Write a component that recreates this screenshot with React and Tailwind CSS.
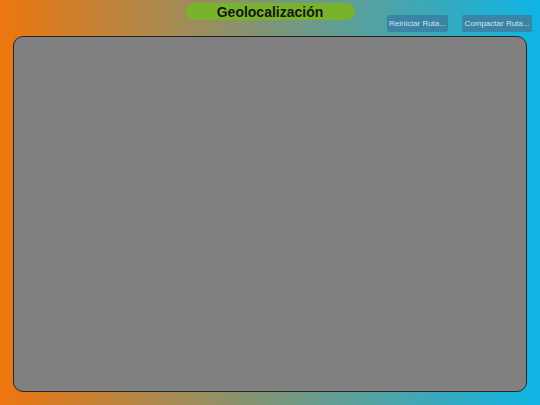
import React from 'react';

const App = () => {
  return (
    <div
      className="w-[540px] h-[405px] flex flex-col bg-linear-to-r/srgb from-[#ee760e] to-[#0db5e5]"
      style={{ fontFamily: '"Liberation Sans", Arial, sans-serif' }}
    >
      {/* Header */}
      <div className="h-[36px] grid grid-cols-[1fr_169px_1fr]">
        <div></div>
        <div className="pt-[3px]">
          <div className="h-[17px] rounded-full bg-[#79b32b] flex items-center justify-center text-[14px] font-bold text-[#161616] leading-none">
            Geolocalización
          </div>
        </div>
        <div className="flex justify-end items-start gap-[14px] pt-[15px] pr-[8px]">
          <button className="w-[61px] h-[17px] rounded-[2px] bg-[#3a84a6] text-[8px] text-[#d3e3ec] leading-none">
            Reiniciar Ruta...
          </button>
          <button className="w-[70px] h-[17px] rounded-[2px] bg-[#3a84a6] text-[8px] text-[#d3e3ec] leading-none">
            Compactar Ruta...
          </button>
        </div>
      </div>

      {/* Map area */}
      <div className="flex-1 px-[13px] pb-[13px]">
        <div className="w-full h-full bg-[#808080] border-[1.5px] border-[#262626] rounded-[10px]"></div>
      </div>
    </div>
  );
};

export default App;
